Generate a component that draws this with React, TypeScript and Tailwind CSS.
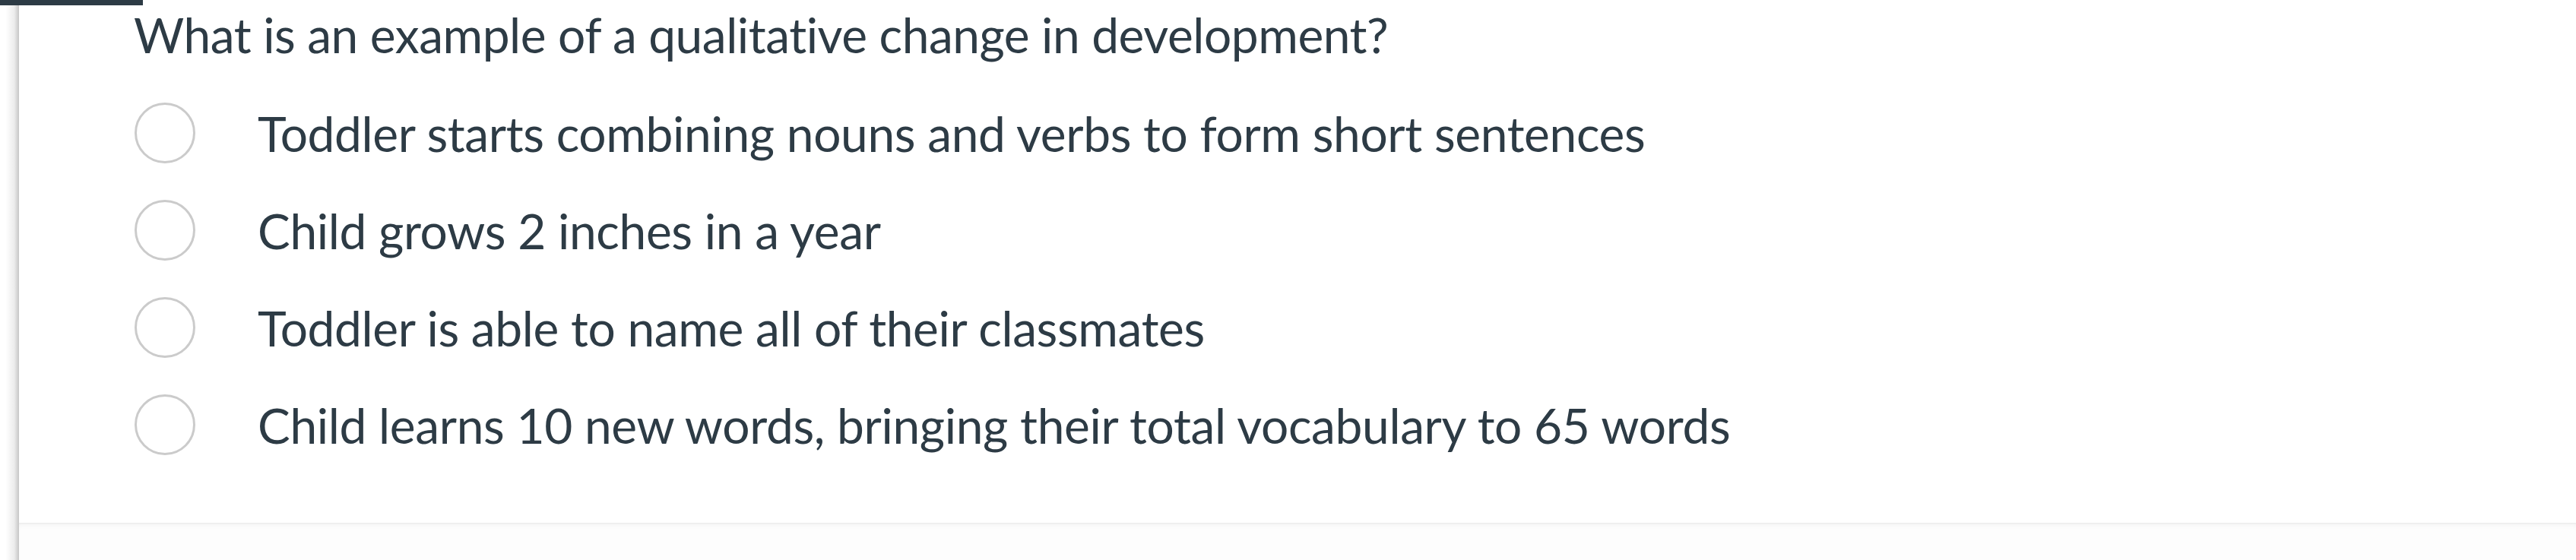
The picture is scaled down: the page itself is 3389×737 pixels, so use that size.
const answers = [
  'Toddler starts combining nouns and verbs to form short sentences',
  'Child grows 2 inches in a year',
  'Toddler is able to name all of their classmates',
  'Child learns 10 new words, bringing their total vocabulary to 65 words',
];

function App() {
  return (
    <div
      className="relative flex h-[737px] w-[3389px] overflow-hidden bg-white text-[#2d3b45]"
      style={{ fontFamily: 'Lato, "Open Sans", sans-serif' }}
    >
      {/* left edge shadow */}
      <div className="w-[25px] shrink-0 bg-[linear-gradient(to_right,#ffffff_30%,#ececec_75%,#c6c6c6)]" />

      <div className="flex flex-1 flex-col">
        <div className="pl-[151px] pt-[8px]">
          <h2 className="text-[64px] leading-[1.2] font-normal tracking-[-0.45px]">
            What is an example of a qualitative change in development?
          </h2>

          <ul className="mt-[26px]">
            {answers.map((a) => (
              <li key={a} className="flex h-[128px] items-center">
                <span className="ml-px size-[80px] shrink-0 rounded-full border-[3px] border-[#cbcbcb] bg-white" />
                <span className="ml-[82px] pt-[3px] text-[64px] leading-[1.2] tracking-[-0.35px]">{a}</span>
              </li>
            ))}
          </ul>
        </div>

        <div className="mt-auto h-[49px] border-t-2 border-[#efefef] bg-[#fdfdfd] shadow-[inset_0_6px_8px_-6px_rgba(0,0,0,0.05)]" />
      </div>

      {/* top nav strip */}
      <div className="absolute left-0 top-0 h-[7px] w-[188px] bg-[#2d3b45]" />
    </div>
  );
}

export default App;
